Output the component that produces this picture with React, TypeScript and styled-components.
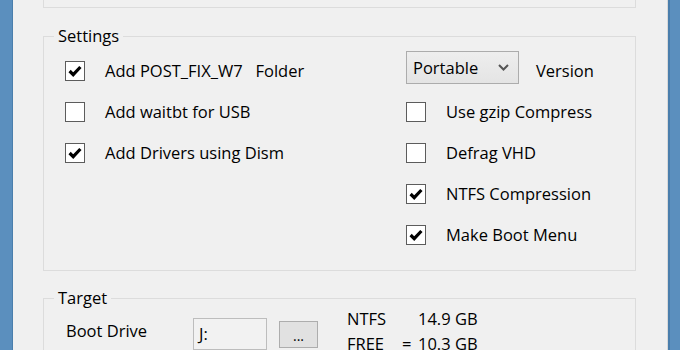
import * as React from 'react';
import styled, { createGlobalStyle } from 'styled-components';

const GlobalStyle = createGlobalStyle`
    html, body {
        margin: 0;
        padding: 0;
        background: #f0f0f0;
        overflow: hidden;
    }
    body {
        font-family: 'Open Sans', 'Noto Sans', sans-serif;
        font-size: 16.5px;
        color: #000;
    }
`;

const Window = styled.div`
    display: flex;
    width: 680px;
    height: 350px;
    overflow: hidden;
`;

const Frame = styled.div<{ side: 'left' | 'right' }>`
    width: 13px;
    flex: none;
    background: #5b8fbe;
    box-shadow: ${(props) =>
        props.side === 'left' ? 'inset -1px 0 0 #4a7eac' : 'inset 1px 0 0 #d8d8d8, inset 3px 0 0 #4a7eac'};
`;

const Client = styled.div`
    flex: 1;
    padding: 0 31px 0 30px;
    display: flex;
    flex-direction: column;
`;

const TopBox = styled.div`
    height: 8px;
    border: 1px solid #dcdcdc;
    border-top: none;
    box-sizing: border-box;
    flex: none;
`;

const Group = styled.fieldset<{ gap: number }>`
    margin: ${(props) => props.gap}px 0 0 0;
    padding: 0;
    border: 1px solid #dcdcdc;
    min-width: 0;
    flex: none;
`;

const Legend = styled.legend`
    margin-left: 10px;
    padding: 0 4px;
    line-height: 20px;
`;

const SettingsGrid = styled.div`
    display: grid;
    grid-template-columns: 341px 1fr;
    grid-auto-rows: 41px;
    padding: 4px 0 15px 21px;
`;

const Cell = styled.div`
    display: flex;
    align-items: center;
`;

const Box = styled.span`
    width: 20px;
    height: 20px;
    box-sizing: border-box;
    border: 1px solid #5c5c5c;
    background: #fff;
    display: flex;
    align-items: center;
    justify-content: center;
    flex: none;
    margin-right: 20px;
`;

const Label = styled.span`
    white-space: pre;
    line-height: 20px;
`;

function Check({ label, checked = false }: { label: string; checked?: boolean }) {
    return (
        <Cell>
            <Box>
                {checked && (
                    <svg width="14" height="12" viewBox="0 0 14 12">
                        <path
                            d="M1.6 6 L5.2 9.6 L12.4 2"
                            fill="none"
                            stroke="#000"
                            strokeWidth="3.2"
                            strokeLinejoin="miter"
                        />
                    </svg>
                )}
            </Box>
            <Label>{label}</Label>
        </Cell>
    );
}

const Combo = styled.div`
    width: 113px;
    height: 33px;
    box-sizing: border-box;
    border: 1px solid #acacac;
    background: linear-gradient(#eeeeee, #e4e4e4);
    display: flex;
    align-items: center;
    justify-content: space-between;
    padding: 0 9px 0 6px;
    margin-right: 17px;
    margin-top: -7px;
`;

const TargetRow = styled.div`
    display: flex;
    align-items: flex-start;
    padding: 0 0 0 22px;
`;

const FieldLabel = styled.span`
    width: 127px;
    padding-top: 11px;
    line-height: 24px;
`;

const TextField = styled.div`
    width: 74px;
    height: 32px;
    box-sizing: border-box;
    border: 1px solid #bdbdbd;
    background: #f2f2f2;
    padding: 4px 5px;
    line-height: 22px;
    margin-top: 10px;
`;

const SmallButton = styled.div`
    width: 39px;
    height: 27px;
    box-sizing: border-box;
    margin: 13px 0 0 12px;
    border: 1px solid #adadad;
    background: #e1e1e1;
    font-size: 14px;
    display: flex;
    align-items: flex-end;
    justify-content: center;
    padding-bottom: 2px;
`;

const Stats = styled.div`
    display: grid;
    grid-template-columns: 55px 16px auto;
    grid-auto-rows: 25px;
    margin: -2px 0 0 29px;
    line-height: 25px;
    white-space: nowrap;
`;

export default function App() {
    return (
        <Window>
            <GlobalStyle />
            <Frame side="left" />
            <Client>
                <TopBox />
                <Group gap={18}>
                    <Legend>Settings</Legend>
                    <SettingsGrid>
                        <Check label="Add POST_FIX_W7   Folder" checked />
                        <Cell>
                            <Combo>
                                <span>Portable</span>
                                <svg width="11" height="7" viewBox="0 0 11 7">
                                    <path d="M1 1 L5.5 5.5 L10 1" fill="none" stroke="#555" strokeWidth="2" />
                                </svg>
                            </Combo>
                            <Label>Version</Label>
                        </Cell>
                        <Check label="Add waitbt for USB" />
                        <Check label="Use gzip Compress" />
                        <Check label="Add Drivers using Dism" checked />
                        <Check label="Defrag VHD" />
                        <span />
                        <Check label="NTFS Compression" checked />
                        <span />
                        <Check label="Make Boot Menu" checked />
                    </SettingsGrid>
                </Group>
                <Group gap={17}>
                    <Legend>Target</Legend>
                    <TargetRow>
                        <FieldLabel>Boot Drive</FieldLabel>
                        <TextField>J:</TextField>
                        <SmallButton>...</SmallButton>
                        <Stats>
                            <span>NTFS</span>
                            <span />
                            <span>14.9 GB</span>
                            <span>FREE</span>
                            <span>=</span>
                            <span>10.3 GB</span>
                        </Stats>
                    </TargetRow>
                </Group>
            </Client>
            <Frame side="right" />
        </Window>
    );
}
